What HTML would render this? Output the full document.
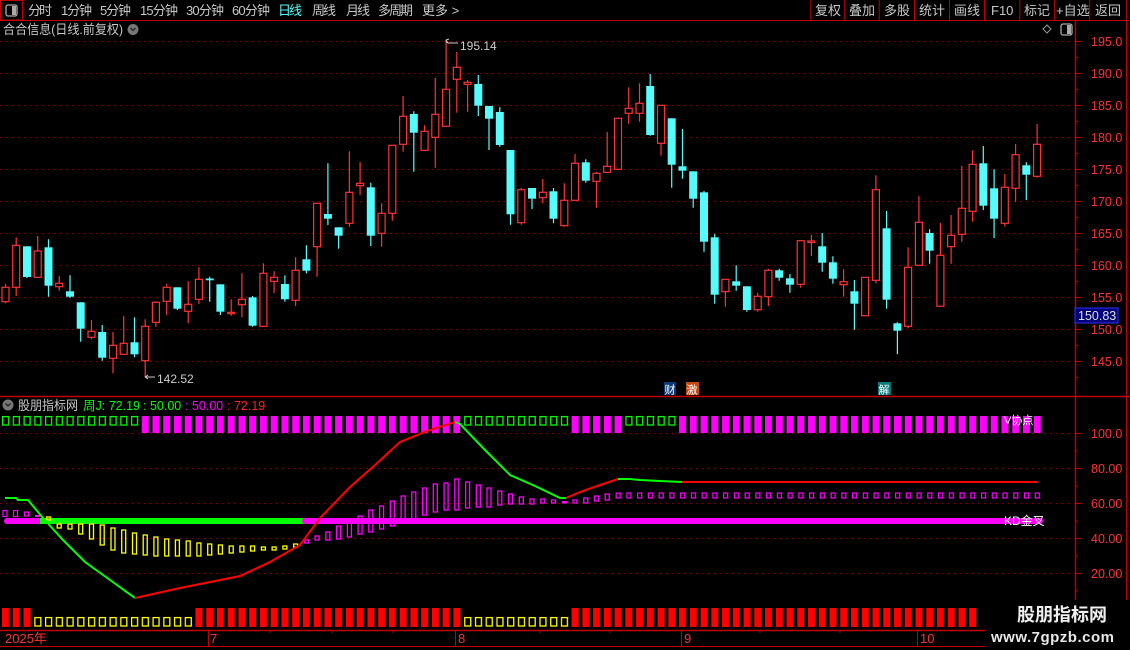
<!DOCTYPE html>
<html><head><meta charset="utf-8"><style>
html,body{margin:0;padding:0;background:#000;width:1130px;height:650px;overflow:hidden}
svg{display:block}
text{font-family:"Liberation Sans","Noto Sans CJK SC",sans-serif}
</style></head><body>
<svg width="1130" height="650" viewBox="0 0 1130 650" xmlns="http://www.w3.org/2000/svg">
<defs>
<pattern id="pg" x="2" y="0" width="10.747" height="650" patternUnits="userSpaceOnUse"><rect x="0.6" y="416.6" width="6" height="8.4" fill="none" stroke="#00ff00" stroke-width="1.3"/></pattern>
<pattern id="pm" x="2" y="0" width="10.747" height="650" patternUnits="userSpaceOnUse"><rect x="0" y="416" width="7" height="17" fill="#ff00ff"/></pattern>
<pattern id="pr" x="2" y="0" width="10.747" height="650" patternUnits="userSpaceOnUse"><rect x="0" y="608" width="7" height="19" fill="#ff0000"/></pattern>
<pattern id="py" x="2" y="0" width="10.747" height="650" patternUnits="userSpaceOnUse"><rect x="0.6" y="617.6" width="6" height="8.4" fill="none" stroke="#ffff00" stroke-width="1.3"/></pattern>
<pattern id="ps" x="3" y="0" width="10.747" height="650" patternUnits="userSpaceOnUse"><rect x="0.6" y="493" width="4" height="5" fill="none" stroke="#ff00ff" stroke-width="1.2"/></pattern>
</defs>

<!-- top bar -->
<rect x="0.5" y="0.5" width="22" height="19.5" fill="none" stroke="#c00000"/>
<rect x="6" y="5" width="11" height="11" rx="2" fill="none" stroke="#aaa" stroke-width="1.3"/><rect x="12" y="6" width="4" height="9" fill="#aaa"/>
<line x1="0" y1="20.5" x2="1130" y2="20.5" stroke="#c00000"/>
<g font-size="13" fill="#c8c8c8">
<text x="28" y="15" textLength="24">分时</text><text x="61" y="15" textLength="31">1分钟</text><text x="100" y="15" textLength="31">5分钟</text><text x="140" y="15" textLength="38">15分钟</text><text x="186" y="15" textLength="38">30分钟</text><text x="232" y="15" textLength="38">60分钟</text><text x="278" y="15" fill="#54fcfc" textLength="24">日线</text><text x="312" y="15" textLength="24">周线</text><text x="346" y="15" textLength="24">月线</text><text x="378" y="15" textLength="35">多周期</text><text x="422" y="15">更多 &gt;</text>
<text x="815" y="15">复权</text><text x="849" y="15">叠加</text><text x="884" y="15">多股</text><text x="919" y="15">统计</text><text x="954" y="15">画线</text><text x="991" y="15">F10</text><text x="1024" y="15">标记</text><text x="1056" y="15">+自选</text><text x="1095" y="15">返回</text>
</g>
<g stroke="#c00000"><line x1="810.8" y1="0" x2="810.8" y2="20"/><line x1="844.3" y1="0" x2="844.3" y2="20"/><line x1="879.2" y1="0" x2="879.2" y2="20"/><line x1="914.5" y1="0" x2="914.5" y2="20"/><line x1="949.5" y1="0" x2="949.5" y2="20"/><line x1="984.5" y1="0" x2="984.5" y2="20"/><line x1="1019.8" y1="0" x2="1019.8" y2="20"/><line x1="1054.4" y1="0" x2="1054.4" y2="20"/><line x1="1089.7" y1="0" x2="1089.7" y2="20"/><line x1="1126.4" y1="0" x2="1126.4" y2="20"/></g>

<text x="3" y="34" font-size="13" fill="#c8c8c8" textLength="120" lengthAdjust="spacingAndGlyphs">合合信息(日线.前复权)</text>
<circle cx="133" cy="29.5" r="5.5" fill="#777"/><path d="M130.5 28l2.5 2.5 2.5-2.5" fill="none" stroke="#222" stroke-width="1.3"/>
<path d="M1047 25l4 4-4 4-4-4z" fill="none" stroke="#999"/>
<rect x="1061" y="24" width="11" height="11" rx="2" fill="none" stroke="#aaa" stroke-width="1.3"/><rect x="1067" y="25" width="4" height="9" fill="#aaa"/>

<!-- price grid -->
<g stroke="#8a0000" stroke-dasharray="1.5 4.5"><line x1="0" y1="41.5" x2="1075" y2="41.5"/><line x1="0" y1="73.5" x2="1075" y2="73.5"/><line x1="0" y1="105.5" x2="1075" y2="105.5"/><line x1="0" y1="137.5" x2="1075" y2="137.5"/><line x1="0" y1="169.5" x2="1075" y2="169.5"/><line x1="0" y1="201.5" x2="1075" y2="201.5"/><line x1="0" y1="233.5" x2="1075" y2="233.5"/><line x1="0" y1="265.5" x2="1075" y2="265.5"/><line x1="0" y1="297.5" x2="1075" y2="297.5"/><line x1="0" y1="329.5" x2="1075" y2="329.5"/><line x1="0" y1="361.5" x2="1075" y2="361.5"/>
<line x1="0" y1="433.5" x2="1075" y2="433.5"/><line x1="0" y1="468.5" x2="1075" y2="468.5"/><line x1="0" y1="503.5" x2="1075" y2="503.5"/><line x1="0" y1="538.5" x2="1075" y2="538.5"/><line x1="0" y1="573.5" x2="1075" y2="573.5"/></g>

<!-- right axis -->
<line x1="1075.5" y1="21" x2="1075.5" y2="630" stroke="#c00000" stroke-width="1.5"/>
<line x1="1126.5" y1="21" x2="1126.5" y2="600" stroke="#c00000"/>
<g stroke="#c00000"><path d="M1075 41.5h6M1075 57.5h3M1075 73.5h6M1075 89.5h3M1075 105.5h6M1075 121.5h3M1075 137.5h6M1075 153.5h3M1075 169.5h6M1075 185.5h3M1075 201.5h6M1075 217.5h3M1075 233.5h6M1075 249.5h3M1075 265.5h6M1075 281.5h3M1075 297.5h6M1075 313.5h3M1075 329.5h6M1075 345.5h3M1075 361.5h6M1075 377.5h3M1075 433.5h6M1075 451h3M1075 468.5h6M1075 486h3M1075 503.5h6M1075 521h3M1075 538.5h6M1075 556h3M1075 573.5h6M1075 591h3"/></g>
<g font-size="12.5" fill="#ff3232">
<text x="1091" y="46">195.0</text><text x="1091" y="78">190.0</text><text x="1091" y="110">185.0</text><text x="1091" y="142">180.0</text><text x="1091" y="174">175.0</text><text x="1091" y="206">170.0</text><text x="1091" y="238">165.0</text><text x="1091" y="270">160.0</text><text x="1091" y="302">155.0</text><text x="1091" y="334">150.0</text><text x="1091" y="366">145.0</text>
<text x="1091" y="438">100.0</text><text x="1091" y="473">80.00</text><text x="1091" y="508">60.00</text><text x="1091" y="543">40.00</text><text x="1091" y="578">20.00</text>
</g>
<rect x="1075" y="308" width="43" height="15" fill="#00007a" stroke="#3030ff" stroke-width="1"/>
<text x="1078" y="320" font-size="12.5" fill="#e0e0e0">150.83</text>

<!-- candles: red -->
<g stroke="#ff3232" stroke-width="1.2">
<path d="M5.5 284V303.3M16.2 237.3V296M37.7 236V277.3M59.2 276V290.7M91.5 320V339.3M113 332V373.3M123.7 316V354.3M145.2 319.3V376.7M155.9 301.3V326.7M166.7 284V315.3M188.2 281.3V323.3M198.9 267.3V304M231.2 299.3V315.7M241.9 273.3V317.3M263.4 263.3V326.3M274.1 271.3V293.3M295.6 257.3V306M317.1 203.3V276.7M349.4 151.3V226.7M360.1 162V195M381.6 203.3V246.7M392.3 145.3V220.7M403.1 96V151.7M424.6 125.3V150.3M435.3 78V167.7M446.1 40V126.3M456.8 52V112.7M467.6 80V111.7M521.3 188V224.7M542.8 179V203.3M564.3 183.3V226.7M575 154V200.3M596.5 171.7V207.7M607.2 132V172.3M618 118.3V169.3M628.7 87.3V123.7M639.5 83.3V121.7M661 105.3V155.7M725.4 279.3V306.7M757.7 292.7V311.7M768.4 268.7V306M800.7 240.7V287.7M811.4 235V256M843.6 269.3V296.7M865.1 277.3V315.7M875.9 175.3V283.3M908.1 247.3V328.3M918.9 196.3V265.3M940.4 223V306.3M951.1 215V263.7M961.8 166V241.7M972.6 150.3V221.7M1004.8 174V226.7M1015.6 144V201.7M1037.1 124V177.7"/>
</g>
<g stroke="#ff3232" stroke-width="1.2" fill="#000">
<rect x="2" y="287.3" width="7" height="14.4"/><rect x="12.7" y="245.3" width="7" height="42"/><rect x="34.2" y="251" width="7" height="26.3"/><rect x="55.7" y="283.3" width="7" height="3.4"/><rect x="88" y="331.3" width="7" height="6"/><rect x="109.5" y="345.3" width="7" height="13"/><rect x="120.2" y="343.3" width="7" height="11"/><rect x="141.7" y="326.3" width="7" height="34.4"/><rect x="152.4" y="302.3" width="7" height="20"/><rect x="163.2" y="287.3" width="7" height="14"/><rect x="184.7" y="304.3" width="7" height="7"/><rect x="195.4" y="279.3" width="7" height="20"/><rect x="227.7" y="312.3" width="7" height="1.4"/><rect x="238.4" y="299.3" width="7" height="5.4"/><rect x="259.9" y="273.3" width="7" height="53"/><rect x="270.6" y="277.3" width="7" height="4"/><rect x="292.1" y="270.3" width="7" height="30"/><rect x="313.6" y="203.3" width="7" height="43.4"/><rect x="345.9" y="192.3" width="7" height="31"/><rect x="356.6" y="183.3" width="7" height="2.4"/><rect x="378.1" y="213.3" width="7" height="20"/><rect x="388.8" y="145.3" width="7" height="68"/><rect x="399.6" y="116.3" width="7" height="28"/><rect x="421.1" y="131.3" width="7" height="19"/><rect x="431.8" y="114.3" width="7" height="23"/><rect x="442.6" y="89.3" width="7" height="37"/><rect x="453.3" y="67.3" width="7" height="12"/><rect x="464.1" y="82.3" width="7" height="2"/><rect x="517.8" y="189.7" width="7" height="33"/><rect x="539.3" y="192.3" width="7" height="5.4"/><rect x="560.8" y="200.3" width="7" height="25.4"/><rect x="571.5" y="163.3" width="7" height="37"/><rect x="593" y="173.3" width="7" height="8"/><rect x="603.7" y="166.3" width="7" height="6"/><rect x="614.5" y="118.3" width="7" height="51"/><rect x="625.2" y="108.3" width="7" height="5"/><rect x="636" y="103.3" width="7" height="10"/><rect x="657.5" y="105.3" width="7" height="38"/><rect x="721.9" y="279.3" width="7" height="12.4"/><rect x="754.2" y="296.3" width="7" height="13.4"/><rect x="764.9" y="270.3" width="7" height="26.4"/><rect x="797.2" y="240.7" width="7" height="43.6"/><rect x="807.9" y="241" width="7" height="1.5"/><rect x="840.1" y="281.7" width="7" height="3"/><rect x="861.6" y="277.3" width="7" height="38.4"/><rect x="872.4" y="189.7" width="7" height="90.6"/><rect x="904.6" y="267.3" width="7" height="59"/><rect x="915.4" y="222.3" width="7" height="43"/><rect x="936.9" y="255.3" width="7" height="51"/><rect x="947.6" y="235.3" width="7" height="11.4"/><rect x="958.3" y="208.3" width="7" height="26"/><rect x="969.1" y="164.3" width="7" height="47"/><rect x="1001.3" y="187.3" width="7" height="36"/><rect x="1012.1" y="154.7" width="7" height="33.6"/><rect x="1033.6" y="144.3" width="7" height="32"/>
</g>
<!-- candles: cyan -->
<g stroke="#54fcfc" stroke-width="1.2">
<path d="M27 246.3V278M48.5 239.3V296.7M70 275.3V298M80.7 302.3V341.7M102.2 325V360.7M134.5 317.3V357.3M177.4 287.3V310M209.7 276.7V301.7M220.4 284.3V315M252.6 296V326.7M284.9 275.3V301.7M306.4 245.3V273.3M327.9 163.3V225M338.6 227.3V248.7M370.8 182.7V246M413.8 111.3V171.7M478.3 75V116M489 106V150M499.8 107.3V146.7M510.5 150V224.7M532 188V209M553.5 188V223.3M585.8 159.3V182.7M650.2 74V135.7M671.7 118.3V187.7M682.5 129V178.7M693.2 171.3V207.7M704 191V251.7M714.7 234V303.7M736.2 265.3V290.7M746.9 286.3V311.7M779.2 268.7V280.7M789.9 274V292.7M822.2 233V271.7M832.9 256.3V283.7M854.4 280V329.7M886.6 211V308.7M897.4 322.3V354.3M929.6 229.3V263.7M983.3 146V210M994.1 169.3V238M1026.3 162.3V200"/>
</g>
<g fill="#54fcfc">
<rect x="23" y="246.3" width="8" height="30.7"/><rect x="44.5" y="247.3" width="8" height="38.4"/><rect x="66" y="291.3" width="8" height="5.4"/><rect x="76.7" y="302.3" width="8" height="26.4"/><rect x="98.2" y="332" width="8" height="25.7"/><rect x="130.5" y="342.3" width="8" height="12"/><rect x="173.4" y="287.3" width="8" height="21.4"/><rect x="205.7" y="278.5" width="8" height="1.8"/><rect x="216.4" y="284.3" width="8" height="27.4"/><rect x="248.6" y="297.3" width="8" height="28.4"/><rect x="280.9" y="284" width="8" height="15.3"/><rect x="302.4" y="259.3" width="8" height="11.4"/><rect x="323.9" y="214" width="8" height="4.7"/><rect x="334.6" y="227.3" width="8" height="8.4"/><rect x="366.8" y="187.3" width="8" height="48.4"/><rect x="409.8" y="114" width="8" height="18.7"/><rect x="474.3" y="84" width="8" height="21.7"/><rect x="485" y="106" width="8" height="12.7"/><rect x="495.8" y="112" width="8" height="33"/><rect x="506.5" y="150" width="8" height="64.3"/><rect x="528" y="188" width="8" height="10.7"/><rect x="549.5" y="191.3" width="8" height="27.4"/><rect x="581.8" y="162.3" width="8" height="18.4"/><rect x="646.2" y="86" width="8" height="49"/><rect x="667.7" y="118.3" width="8" height="46.4"/><rect x="678.5" y="166.3" width="8" height="4.4"/><rect x="689.2" y="171.3" width="8" height="27.4"/><rect x="700" y="192.3" width="8" height="49.4"/><rect x="710.7" y="237.3" width="8" height="57.4"/><rect x="732.2" y="281.3" width="8" height="4.4"/><rect x="742.9" y="286.3" width="8" height="23.7"/><rect x="775.2" y="270.3" width="8" height="7.4"/><rect x="785.9" y="278.3" width="8" height="6.4"/><rect x="818.2" y="246.3" width="8" height="16.4"/><rect x="828.9" y="262.3" width="8" height="16.4"/><rect x="850.4" y="291.3" width="8" height="12.4"/><rect x="882.6" y="228.3" width="8" height="71.4"/><rect x="893.4" y="323.3" width="8" height="7.4"/><rect x="925.6" y="233" width="8" height="17.7"/><rect x="979.3" y="163.3" width="8" height="42.4"/><rect x="990.1" y="188.3" width="8" height="30.4"/><rect x="1022.3" y="165.3" width="8" height="9.4"/>
</g>
<!-- hi/lo labels -->
<path d="M446 40l2 3h10M446 40l3-1M446 40l1 3" stroke="#ccc" fill="none"/><text x="460" y="50" font-size="12" fill="#ccc">195.14</text>
<path d="M145 377h10M145 377l3-2M145 377l3 2" stroke="#ccc" fill="none"/><text x="157" y="383" font-size="12" fill="#ccc">142.52</text>
<!-- markers -->
<rect x="664" y="382" width="12" height="13" fill="#0a3a7a"/><text x="664.5" y="393.5" font-size="11" fill="#fff">财</text>
<rect x="686" y="382" width="13" height="13" fill="#c04a10"/><text x="686.5" y="393.5" font-size="11" fill="#fff">激</text>
<rect x="878" y="382" width="13" height="13" fill="#0a7a7a"/><text x="878.5" y="393.5" font-size="11" fill="#fff">解</text>

<!-- indicator separator -->
<line x1="0" y1="396.5" x2="1130" y2="396.5" stroke="#c00000" stroke-width="1.5"/>
<circle cx="8" cy="405" r="5.5" fill="#777"/><path d="M5.5 403.5l2.5 2.5 2.5-2.5" fill="none" stroke="#222" stroke-width="1.3"/>
<text x="18" y="410" font-size="13" fill="#c8c8c8" textLength="60" lengthAdjust="spacingAndGlyphs">股朋指标网</text>
<text x="83" y="410" font-size="12.5" fill="#00ff00">周J: 72.19</text>
<text x="143" y="410" font-size="12.5" fill="#00ff00">: 50.00</text>
<text x="185" y="410" font-size="12.5" fill="#ff00ff">: 50.00</text>
<text x="227" y="410" font-size="12.5" fill="#ff2020">: 72.19</text>

<!-- top row -->
<rect x="0" y="410" width="139" height="20" fill="url(#pg)"/>
<rect x="139" y="410" width="321" height="25" fill="url(#pm)"/>
<rect x="461" y="410" width="109" height="20" fill="url(#pg)"/>
<rect x="570" y="410" width="53" height="25" fill="url(#pm)"/>
<rect x="623" y="410" width="55" height="20" fill="url(#pg)"/>
<rect x="678" y="410" width="364" height="25" fill="url(#pm)"/>
<text x="1004" y="424" font-size="11" fill="#fff">V协点</text>

<!-- band -->
<line x1="7" y1="521" x2="40" y2="521" stroke="#ff00ff" stroke-width="6" stroke-linecap="round"/>
<line x1="40" y1="521" x2="305" y2="521" stroke="#00ff00" stroke-width="6"/>
<line x1="305" y1="521" x2="1040" y2="521" stroke="#ff00ff" stroke-width="6" stroke-linecap="round"/>
<text x="1004" y="525" font-size="12" fill="#fff">KD金叉</text>

<!-- small magenta left -->
<g fill="none" stroke="#ff00ff" stroke-width="1.2"><rect x="3" y="510.5" width="4" height="6"/><rect x="13.5" y="510.5" width="4" height="6"/><rect x="24.5" y="512" width="4" height="4"/></g>
<rect x="35" y="515" width="5" height="2" fill="#ff00ff"/>

<!-- yellow hollow bars -->
<g fill="none" stroke="#ffff00" stroke-width="1.3">
<rect x="46.5" y="517" width="4" height="3"/><rect x="57.2" y="524" width="4" height="4"/><rect x="68" y="524" width="4" height="5"/><rect x="78.7" y="524" width="4" height="10"/><rect x="89.5" y="524" width="4" height="15"/><rect x="100.2" y="525" width="4" height="20"/><rect x="111" y="528" width="4" height="22"/><rect x="121.7" y="530" width="4" height="23"/><rect x="132.5" y="533" width="4" height="21"/><rect x="143.2" y="535" width="4" height="20"/><rect x="153.9" y="537" width="4" height="19"/><rect x="164.7" y="539" width="4" height="17"/><rect x="175.4" y="540" width="4" height="16"/><rect x="186.2" y="541" width="4" height="15"/><rect x="196.9" y="543" width="4" height="13"/><rect x="207.7" y="544" width="4" height="11"/><rect x="218.4" y="545" width="4" height="9"/><rect x="229.2" y="546" width="4" height="7"/><rect x="239.9" y="546" width="4" height="6"/><rect x="250.6" y="546" width="4" height="5"/><rect x="261.4" y="547" width="4" height="3"/><rect x="272.1" y="547" width="4" height="3"/><rect x="282.9" y="546" width="4" height="3"/><rect x="293.6" y="544" width="4" height="3"/>
</g>
<!-- magenta hollow bars -->
<g fill="none" stroke="#ff00ff" stroke-width="1.3">
<rect x="304.4" y="540" width="4" height="3"/><rect x="315.1" y="536" width="4" height="4"/><rect x="325.9" y="532" width="4" height="8"/><rect x="336.6" y="526" width="4" height="13"/><rect x="347.4" y="521" width="4" height="16"/><rect x="358.1" y="516" width="4" height="18"/><rect x="368.8" y="510" width="4" height="22"/><rect x="379.6" y="506" width="4" height="23"/><rect x="390.3" y="501" width="4" height="25"/><rect x="401.1" y="496" width="4" height="26"/><rect x="411.8" y="492" width="4" height="28"/><rect x="422.6" y="488" width="4" height="27"/><rect x="433.3" y="484" width="4" height="28"/><rect x="444.1" y="483" width="4" height="27"/><rect x="454.8" y="479" width="4" height="31"/><rect x="465.6" y="482" width="4" height="26"/><rect x="476.3" y="485" width="4" height="22"/><rect x="487" y="488" width="4" height="19"/><rect x="497.8" y="491" width="4" height="14"/><rect x="508.5" y="494" width="4" height="10"/><rect x="519.3" y="497" width="4" height="7"/><rect x="530" y="499" width="4" height="5"/><rect x="540.8" y="499" width="4" height="4"/><rect x="551.5" y="500" width="4" height="3"/><rect x="573" y="500" width="4" height="3"/><rect x="583.8" y="498" width="4" height="5"/><rect x="594.5" y="496" width="4" height="5"/><rect x="605.2" y="494" width="4" height="6"/>
</g>
<rect x="562" y="501" width="5" height="2.5" fill="#ff00ff"/>
<rect x="614" y="488" width="428" height="14" fill="url(#ps)"/>

<!-- J line -->
<polyline points="5,498 16,498 18,500 28,500 43,518 63,540 85,562 110,580 135,598" fill="none" stroke="#00ff00" stroke-width="2"/>
<polyline points="135,598 180,588 240,576 270,562 300,545 320,518 350,487 375,465 400,442 430,430 455,422" fill="none" stroke="#ff0000" stroke-width="2"/>
<polyline points="455,422 460,424 485,450 510,475 535,486 560,498 566,498" fill="none" stroke="#00ff00" stroke-width="2"/>
<polyline points="566,498 580,492 600,485 618,479" fill="none" stroke="#ff0000" stroke-width="2"/>
<polyline points="618,479 630,479 640,480 660,481 682,482" fill="none" stroke="#00ff00" stroke-width="2"/>
<line x1="682" y1="482" x2="1038" y2="482" stroke="#ff0000" stroke-width="2"/>

<!-- bottom row -->
<rect x="0" y="600" width="32" height="30" fill="url(#pr)"/>
<rect x="32" y="600" width="162" height="30" fill="url(#py)"/>
<rect x="194" y="600" width="268" height="30" fill="url(#pr)"/>
<rect x="462" y="600" width="108" height="30" fill="url(#py)"/>
<rect x="570" y="600" width="410" height="30" fill="url(#pr)"/>

<!-- date axis -->
<line x1="0" y1="630.5" x2="985" y2="630.5" stroke="#c00000" stroke-width="1.5"/>
<line x1="0" y1="646.5" x2="985" y2="646.5" stroke="#c00000"/>
<g stroke="#c00000"><line x1="208.5" y1="630" x2="208.5" y2="646"/><line x1="455.5" y1="630" x2="455.5" y2="646"/><line x1="681.5" y1="630" x2="681.5" y2="646"/><line x1="917.5" y1="630" x2="917.5" y2="646"/><path d="M270 630v3M332 630v3M393 630v3M540 630v3M610 630v3M760 630v3M840 630v3"/></g>
<g font-size="13" fill="#ff3232"><text x="5" y="643">2025年</text><text x="210" y="643">7</text><text x="458" y="643">8</text><text x="684" y="643">9</text><text x="920" y="643">10</text></g>

<!-- watermark -->
<rect x="985" y="600" width="145" height="50" fill="#000"/>
<text x="1017" y="621" font-size="18" font-weight="bold" fill="#f0f0f0">股朋指标网</text>
<text x="991" y="642" font-size="15" font-weight="bold" fill="#e8e8e8" letter-spacing="0.5">www.7gpzb.com</text>
</svg>
</body></html>
